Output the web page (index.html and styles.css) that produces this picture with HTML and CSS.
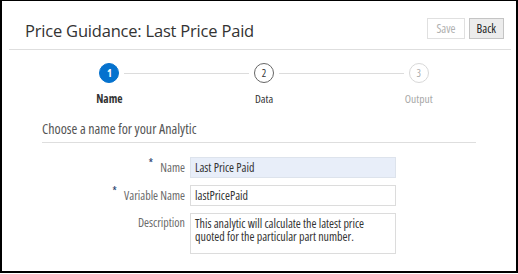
FILE: index.html
```html
<!DOCTYPE html>
<html>
<head>
<meta charset="utf-8">
<link rel="stylesheet" href="styles.css">
</head>
<body>
<div class="frame">
  <div class="header">
    <h1 class="title">Price Guidance: Last Price Paid</h1>
    <div class="actions">
      <button class="btn btn-disabled">Save</button>
      <button class="btn">Back</button>
    </div>
  </div>
  <div class="stepper">
    <div class="step step-first step-active">
      <div class="track"><span class="line"></span><span class="circle">1</span><span class="line"></span></div>
      <div class="label">Name</div>
    </div>
    <div class="step step-current">
      <div class="track"><span class="line"></span><span class="circle">2</span><span class="line"></span></div>
      <div class="label">Data</div>
    </div>
    <div class="step step-last step-future">
      <div class="track"><span class="line"></span><span class="circle">3</span><span class="line"></span></div>
      <div class="label">Output</div>
    </div>
  </div>
  <div class="section">
    <h2 class="section-title">Choose a name for your Analytic</h2>
    <div class="form">
      <label class="field-label"><span class="req">*</span>Name</label>
      <input class="field field-filled" value="Last Price Paid">
      <label class="field-label"><span class="req">*</span>Variable Name</label>
      <input class="field" value="lastPricePaid">
      <label class="field-label field-label-top">Description</label>
      <textarea class="field field-area">This analytic will calculate the latest price quoted for the particular part number.</textarea>
    </div>
  </div>
</div>
</body>
</html>
```
FILE: styles.css
```css
* { box-sizing: border-box; }
html, body { margin: 0; padding: 0; background: #fff; }
body { font-family: "Open Sans", "Noto Sans", sans-serif; font-stretch: 75%; color: #333; }

.frame {
  width: 518px;
  height: 273px;
  border-top: 1px solid #000;
  border-left: 2px solid #000;
  border-right: 2px solid #000;
  border-bottom: 2px solid #000;
  background: #fff;
  overflow: hidden;
}

.header {
  display: flex;
  align-items: flex-start;
  justify-content: space-between;
  margin: 0 5px 0 7px;
  padding: 17px 7px 7px 16px;
  border-bottom: 1px solid #dedede;
}
.title {
  margin: 2px 0 0 0;
  font-size: 16.5px;
  font-stretch: 100%;
  letter-spacing: -0.2px;
  line-height: 22px;
  font-weight: 400;
  color: #333;
}
.actions { display: flex; gap: 4px; }
.btn {
  height: 21px;
  padding: 0 7px;
  font-family: "Open Sans", sans-serif;
  font-stretch: 75%;
  font-size: 12px;
  line-height: 19px;
  border: 1px solid #c4c4c4;
  background: #ececec;
  color: #222;
  border-radius: 0;
}
.btn-disabled {
  padding: 0 8px;
  background: #fff;
  border-color: #e0e0e0;
  color: #b0b0b0;
}

.stepper {
  display: flex;
  margin-left: 30px;
  width: 464px;
  padding-top: 13px;
}
.step { flex: 1; display: flex; flex-direction: column; align-items: center; }
.track { display: flex; align-items: center; width: 100%; height: 20px; }
.line { flex: 1; height: 1px; background: #dcdcdc; }
.step-first .line:first-child, .step-last .line:last-child { visibility: hidden; }
.circle {
  width: 20px; height: 20px;
  margin: 0 5px;
  border-radius: 50%;
  display: flex; align-items: center; justify-content: center;
  font-size: 10.5px;
  border: 1px solid #666;
  color: #333;
  background: #fff;
}
.step-active .circle { background: #0572ce; border-color: #0572ce; color: #fff; font-weight: 700; }
.step-future .circle { border-color: #d8d8d8; color: #aaa; }
.label { margin-top: 9px; font-size: 11.5px; line-height: 14px; color: #333; }
.step-active .label { font-weight: 700; }
.step-future .label { color: #a8a8a8; }

.section { margin: 0 40px; padding-top: 14px; }
.section-title {
  margin: 0;
  font-size: 14px;
  line-height: 18px;
  font-weight: 400;
  color: #555;
  padding-bottom: 4px;
  border-bottom: 1px solid #dedede;
}

.form {
  display: grid;
  grid-template-columns: 143px 206px;
  column-gap: 5px;
  row-gap: 7px;
  padding-top: 14px;
  align-items: center;
}
.field-label {
  text-align: right;
  font-size: 12px;
  color: #6a6a6a;
}
.field-label-top { align-self: start; padding-top: 1px; }
.req { color: #1a3a6a; font-size: 12px; position: relative; top: -4px; margin-right: 7px; }
.field {
  height: 21px;
  padding: 0 4px;
  border: 1px solid #dcdcdc;
  font-family: "Open Sans", sans-serif;
  font-stretch: 75%;
  font-size: 12px;
  color: #333;
  background: #fff;
  outline: none;
}
.field-filled { background: #e8eef9; border-color: #dde3ec; }
.field-area {
  height: 41px;
  padding: 3px 6px 3px 4px;
  line-height: 13px;
  resize: none;
  overflow: hidden;
}
```
